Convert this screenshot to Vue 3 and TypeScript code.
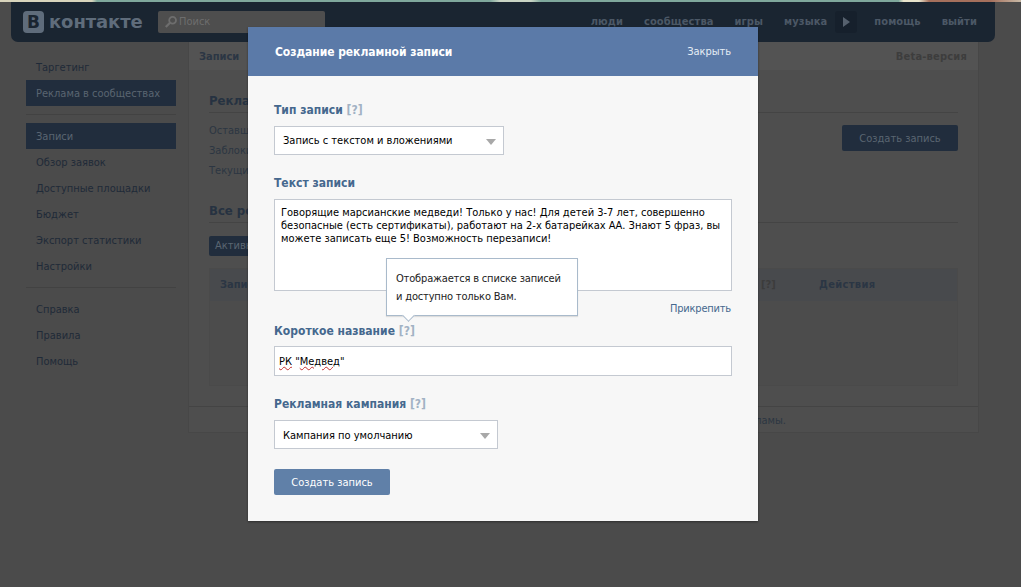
<script setup lang="ts">
const nav1: string[] = ['Обзор заявок', 'Доступные площадки', 'Бюджет', 'Экспорт статистики', 'Настройки']
const nav2: string[] = ['Справка', 'Правила', 'Помощь']
const topLinks: string[] = ['люди', 'сообщества', 'игры', 'музыка']
</script>

<template>
  <div class="page">
    <div class="strip"></div>
    <header class="topbar">
      <div class="logo"><span class="logo-b">В</span><span class="logo-t">контакте</span></div>
      <div class="search">
        <svg width="14" height="14" viewBox="0 0 14 14"><circle cx="8.6" cy="5.2" r="3.4" fill="none" stroke="#6e6e6e" stroke-width="1.8"/><path d="M6 7.8 1.8 12" stroke="#6e6e6e" stroke-width="2.2"/></svg>
        <span>Поиск</span>
      </div>
      <nav class="toplinks">
        <span v-for="l in topLinks" :key="l">{{ l }}</span>
        <span class="play"><i></i></span>
        <span class="help">помощь</span>
        <span>выйти</span>
      </nav>
    </header>
    <div class="main">
      <aside class="side">
        <div class="item">Таргетинг</div>
        <div class="item on">Реклама в сообществах</div>
        <div class="sep"></div>
        <div class="item on">Записи</div>
        <div v-for="n in nav1" :key="n" class="item">{{ n }}</div>
        <div class="sep"></div>
        <div v-for="n in nav2" :key="n" class="item">{{ n }}</div>
      </aside>
      <section class="panel">
        <div class="tabs"><b>Записи</b><b class="beta">Beta-версия</b></div>
        <div class="body">
          <h3>Реклама</h3>
          <div class="stats">
            <div class="stat-lines">
              <div>Оставшийся бюджет</div>
              <div>Заблокировано</div>
              <div>Текущий расход</div>
            </div>
            <div class="btn-dark">Создать запись</div>
          </div>
          <h3 class="h2">Все рекл</h3>
          <div class="pill">Активные</div>
          <div class="table">
            <div class="thead"><b>Запись</b><span class="q">[?]</span><b class="act">Действия</b></div>
          </div>
        </div>
        <div class="foot">Здесь пока нет рекламы.</div>
      </section>
    </div>

    <div class="modal">
      <div class="m-head"><b>Создание рекламной записи</b><span>Закрыть</span></div>
      <div class="m-body">
        <div class="label l1">Тип записи <em>[?]</em></div>
        <div class="select s1">Запись с текстом и вложениями<i></i></div>
        <div class="label l2">Текст записи</div>
        <div class="area">Говорящие марсианские медведи! Только у нас! Для детей 3-7 лет, совершенно безопасные (есть сертификаты), работают на 2-х батарейках АА. Знают 5 фраз, вы можете записать еще 5! Возможность перезаписи!</div>
        <div class="attach">Прикрепить</div>
        <div class="label l3">Короткое название <em>[?]</em></div>
        <div class="input"><u>РК</u> "<u>Медвед</u>"</div>
        <div class="label l4">Рекламная кампания <em>[?]</em></div>
        <div class="select s2">Кампания по умолчанию<i></i></div>
        <div class="btn">Создать запись</div>
      </div>
      <div class="tip">Отображается в списке записей<br>и доступно только Вам.<i></i></div>
    </div>
  </div>
</template>

<style>
html, body { margin: 0; background: #4b4b4b; }
</style>

<style scoped>
.page {
  position: relative;
  width: 1021px;
  height: 587px;
  overflow: hidden;
  background: #4b4b4b;
  font: 11px/14px "DejaVu Sans Condensed", "DejaVu Sans", Tahoma, sans-serif;
  color: #1f2a38;
}
.strip {
  height: 2px;
  background: linear-gradient(90deg, #d8d4bc 0 9%, #7fa89c 9.5% 48%, #c9d4c4 49% 52%, #7fa89c 53% 88%, #e8e4cc 88.5% 90%, #a5705c 91% 97%, #c8b9a6);
}
.topbar {
  height: 40px;
  margin: 0 26px 0 11px;
  background: #1a2531;
  border-radius: 0 0 7px 7px;
  display: flex;
  align-items: center;
  position: relative;
}
.logo { display: flex; align-items: center; margin-left: 12px; width: 124px; }
.logo-b {
  flex: none;
  width: 21px;
  height: 22px;
  border-radius: 4px;
  background: #5f6c7b;
  color: #1a2531;
  font: bold 17px/22px "DejaVu Sans", sans-serif;
  text-align: center;
}
.logo-t {
  margin-left: 5px;
  color: #5f6c7b;
  font: bold 18px/22px "DejaVu Sans", sans-serif;
  letter-spacing: -0.1px;
}
.search {
  width: 167px;
  height: 22px;
  margin-left: 11px;
  box-sizing: border-box;
  padding-left: 6px;
  background: #4e4e4e;
  border-radius: 2px;
  color: #6d6d6d;
  display: flex;
  align-items: center;
  gap: 1px;
}
.toplinks {
  position: absolute;
  right: 18px;
  top: 0;
  height: 40px;
  display: flex;
  align-items: center;
  gap: 21px;
  color: #4c5866;
  font-weight: bold;
  font-size: 11px;
  letter-spacing: 0.1px;
}
.play {
  width: 22px;
  height: 22px;
  margin-left: -13px;
  margin-right: -4px;
  background: #16202c;
  border-radius: 3px;
  display: flex;
  align-items: center;
  justify-content: center;
}
.play i {
  border-left: 7px solid #56616e;
  border-top: 5px solid transparent;
  border-bottom: 5px solid transparent;
}
.main { display: flex; align-items: flex-start; padding-left: 26px; }
.side { width: 150px; padding-top: 12px; margin-right: 12px; }
.item { height: 26px; line-height: 27px; padding-left: 10px; }
.item.on { background: #212d3d; color: #5a6571; }
.sep { height: 1px; background: #424242; margin: 8px 0; }
.panel {
  width: 791px;
  height: 391px;
  box-sizing: border-box;
  background: #4e4e4e;
  border: 1px solid #474747;
  border-top: 0;
  display: flex;
  flex-direction: column;
}
.tabs {
  height: 28px;
  flex: none;
  background: #535353;
  display: flex;
  justify-content: space-between;
  align-items: center;
  padding: 1px 11px 0 10px;
  box-sizing: border-box;
  color: #2b3644;
}
.beta { color: #3d3d3d; letter-spacing: 0.2px; }
.body { flex: 1; padding: 22px 20px 0; position: relative; }
h3 {
  margin: 0;
  height: 20px;
  font-size: 13px;
  line-height: 17px;
  color: #263241;
  border-bottom: 1px solid #444;
}
.stats { display: flex; justify-content: space-between; padding-top: 11px; height: 89px; box-sizing: border-box; }
.stat-lines div { height: 20px; line-height: 14px; color: #2c3642; }
.btn-dark {
  width: 116px;
  height: 26px;
  margin-top: 1px;
  background: #212d3d;
  border-radius: 2px;
  color: #5a6571;
  text-align: center;
  line-height: 27px;
}
.pill {
  margin-top: 13px;
  width: 80px;
  height: 20px;
  background: #212d3d;
  color: #5a6571;
  border-radius: 2px;
  line-height: 20px;
  padding-left: 6px;
  box-sizing: border-box;
}
.table {
  margin-top: 12px;
  height: 118px;
  background: #4c4c4c;
  border: 1px solid #4a4a4a;
  box-sizing: border-box;
}
.thead {
  height: 32px;
  background: #484a4d;
  display: flex;
  align-items: center;
  padding: 0 10px;
  color: #2b3644;
  position: relative;
}
.q { position: absolute; left: 551px; color: #3c3c3c; font-weight: bold; }
.act { position: absolute; left: 609px; letter-spacing: 0.35px; }
.foot {
  height: 25px;
  flex: none;
  border-top: 1px solid #444;
  line-height: 27px;
  text-align: right;
  padding-right: 192px;
  color: #2c3642;
}
.modal {
  position: absolute;
  left: 248px;
  top: 27px;
  width: 510px;
  height: 494px;
  background: #f7f7f7;
  box-shadow: 0 1px 2px rgba(0, 0, 0, .4);
}
.m-head {
  height: 49px;
  background: #5b7aa8;
  color: #fff;
  display: flex;
  justify-content: space-between;
  align-items: center;
  padding: 0 27px 0 27px;
  font-size: 12px;
  letter-spacing: -0.06px;
}
.m-head span { font-size: 11px; color: #e6edf5; }
.m-body { padding: 0 26px 0 26px; }
.label {
  color: #45688e;
  font-weight: bold;
  font-size: 12px;
  line-height: 16px;
}
.label em { font-style: normal; color: #a2b2c4; }
.l1 { padding-top: 26px; margin-bottom: 8px; }
.l2 { padding-top: 20px; margin-bottom: 8px; }
.l3 { padding-top: 5px; margin-bottom: 7px; }
.l4 { padding-top: 20px; margin-bottom: 8px; }
.select {
  position: relative;
  box-sizing: border-box;
  height: 29px;
  line-height: 27px;
  padding-left: 8px;
  background: #fff;
  border: 1px solid #c4c9d1;
  color: #000;
}
.select i {
  position: absolute;
  right: 7px;
  top: 12px;
  border-top: 6px solid #a8a8a8;
  border-left: 5px solid transparent;
  border-right: 5px solid transparent;
}
.s1 { width: 230px; }
.s2 { width: 224px; line-height: 29px; }
.area {
  box-sizing: border-box;
  width: 458px;
  height: 92px;
  padding: 6px 6px;
  line-height: 13px;
  background: #fff;
  border: 1px solid #c4c9d1;
  color: #000;
}
.attach {
  text-align: right;
  width: 457px;
  height: 16px;
  padding-top: 11px;
  line-height: 14px;
  color: #45688e;
  letter-spacing: -0.2px;
}
.input {
  box-sizing: border-box;
  width: 458px;
  height: 30px;
  padding-left: 4px;
  line-height: 30px;
  background: #fff;
  border: 1px solid #c4c9d1;
  color: #000;
}
.input u {
  text-decoration: underline wavy #c43030 1px;
  text-underline-offset: 1px;
}
.btn {
  margin-top: 20px;
  width: 116px;
  height: 26px;
  background: #6080a8;
  color: #fff;
  border-radius: 2px;
  text-align: center;
  line-height: 27px;
}
.tip {
  position: absolute;
  left: 138px;
  top: 231px;
  width: 192px;
  height: 58px;
  box-sizing: border-box;
  padding: 11px 9px;
  line-height: 18px;
  letter-spacing: -0.17px;
  background: #fff;
  border: 1px solid #a9bacb;
  box-shadow: 0 1px 1px rgba(0, 0, 0, .1);
  color: #222;
}
.tip i {
  position: absolute;
  left: 17px;
  bottom: -5px;
  width: 8px;
  height: 8px;
  background: #fff;
  border-right: 1px solid #a9bacb;
  border-bottom: 1px solid #a9bacb;
  transform: rotate(45deg);
}
</style>
